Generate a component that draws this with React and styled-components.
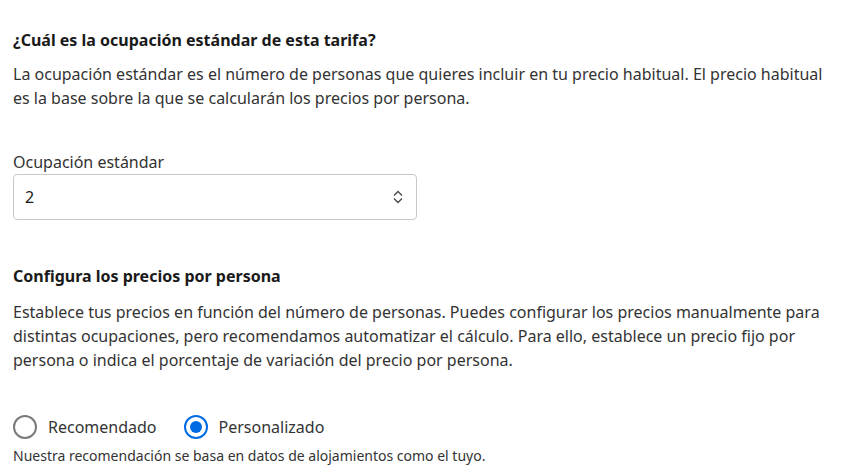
import React from 'react';
import styled, { createGlobalStyle } from 'styled-components';

const GlobalStyle = createGlobalStyle`
  body {
    margin: 0;
    background: #fff;
    font-family: "Segoe UI", "Noto Sans", "Open Sans", sans-serif;
    color: #1a1a1a;
  }
`;

const Page = styled.div`
  padding: 28px 13px 0 13px;
  width: 864px;
  box-sizing: border-box;
`;

const Section = styled.section`
  margin-bottom: ${(p) => p.gap || 0}px;
`;

const Heading = styled.h3`
  margin: 0 0 ${(p) => p.space || 10}px;
  font-size: 16px;
  line-height: 24px;
  font-weight: 700;
  color: #1a1a1a;
`;

const Text = styled.p`
  margin: 0;
  font-size: 16px;
  line-height: 24px;
  color: #333;
`;

const Field = styled.label`
  display: flex;
  flex-direction: column;
  width: 404px;
`;

const FieldLabel = styled.span`
  font-size: 16px;
  line-height: 24px;
  color: #333;
`;

const SelectBox = styled.div`
  display: flex;
  align-items: center;
  justify-content: space-between;
  height: 44px;
  padding: 0 12px 0 11px;
  border: 1px solid #c8c8c8;
  border-radius: 4px;
  font-size: 16px;
  color: #1a1a1a;
`;

const RadioRow = styled.div`
  display: flex;
  align-items: center;
  gap: 27px;
  margin-bottom: 7px;
`;

const RadioOption = styled.label`
  display: flex;
  align-items: center;
  gap: 11px;
  font-size: 16px;
  line-height: 24px;
  color: #333;
`;

const RadioDot = styled.span`
  box-sizing: border-box;
  width: 24px;
  height: 24px;
  border-radius: 50%;
  border: 2px solid ${(p) => (p.checked ? '#006ce4' : '#7a7a7a')};
  display: flex;
  align-items: center;
  justify-content: center;

  &::after {
    content: '';
    display: ${(p) => (p.checked ? 'block' : 'none')};
    width: 12px;
    height: 12px;
    border-radius: 50%;
    background: #006ce4;
  }
`;

const Hint = styled.p`
  margin: 0;
  font-size: 14px;
  line-height: 20px;
  color: #333;
`;

const Chevrons = () => (
  <svg width="12" height="16" viewBox="0 0 12 16" fill="none" stroke="#4a4a4a" strokeWidth="1.4">
    <path d="M2 6.5L6 2.5L10 6.5" />
    <path d="M2 9.5L6 13.5L10 9.5" />
  </svg>
);

export default function App() {
  return (
    <>
      <GlobalStyle />
      <Page>
        <Section gap={40}>
          <Heading>¿Cuál es la ocupación estándar de esta tarifa?</Heading>
          <Text>
            La ocupación estándar es el número de personas que quieres incluir en tu precio habitual. El precio habitual
            <br />
            es la base sobre la que se calcularán los precios por persona.
          </Text>
        </Section>
        <Section gap={44}>
          <Field>
            <FieldLabel>Ocupación estándar</FieldLabel>
            <SelectBox>
              <span>2</span>
              <Chevrons />
            </SelectBox>
          </Field>
        </Section>
        <Section gap={43}>
          <Heading space={12}>Configura los precios por persona</Heading>
          <Text>
            Establece tus precios en función del número de personas. Puedes configurar los precios manualmente para
            <br />
            distintas ocupaciones, pero recomendamos automatizar el cálculo. Para ello, establece un precio fijo por
            <br />
            persona o indica el porcentaje de variación del precio por persona.
          </Text>
        </Section>
        <Section>
          <RadioRow>
            <RadioOption>
              <RadioDot />
              Recomendado
            </RadioOption>
            <RadioOption>
              <RadioDot checked />
              Personalizado
            </RadioOption>
          </RadioRow>
          <Hint>Nuestra recomendación se basa en datos de alojamientos como el tuyo.</Hint>
        </Section>
      </Page>
    </>
  );
}
